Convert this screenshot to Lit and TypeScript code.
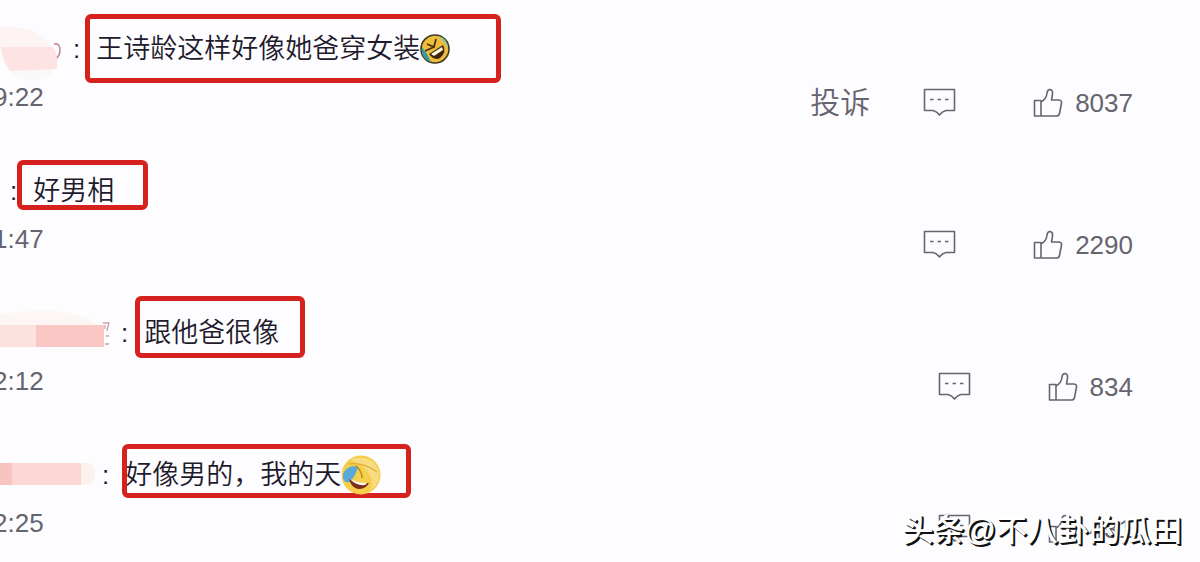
import { LitElement, html, css, nothing } from "lit";
import { customElement, property } from "lit/decorators.js";
import { classMap } from "lit/directives/class-map.js";

interface Comment {
  kind: string;
  nameWidth: number;
  text: string;
  time: string;
  likes: string;
  report?: boolean;
}

const comments: Comment[] = [
  { kind: "first", nameWidth: 73, text: "王诗龄这样好像她爸穿女装", time: "9:22", likes: "8037", report: true },
  { kind: "second", nameWidth: 10, text: "好男相", time: "1:47", likes: "2290" },
  { kind: "third", nameWidth: 121, text: "跟他爸很像", time: "2:12", likes: "834" },
  { kind: "fourth", nameWidth: 102, text: "好像男的，我的天", time: "2:25", likes: "431" },
];

/* Mosaic patches that hide the user names */
const masks: Record<string, unknown> = {
  first: html`<svg class="mask" width="64" height="60" viewBox="0 0 64 60" aria-hidden="true">
    <path d="M0 2 Q28 0 44 12 Q58 24 54 45 Q46 56 34 56 Q8 54 0 30Z" fill="#f8f9f8" />
    <path d="M0 2 Q28 0 42 12 L50 22 H0Z" fill="#fdf3f3" />
    <path d="M1 22 H53 Q59 30 57 44 L10 46 Q3 36 1 22Z" fill="#fde3e3" />
    <path d="M54 19 Q60 18 60 25 Q60 30 57 33" fill="none" stroke="#c98a90" stroke-width="1.5" />
  </svg>`,
  third: html`<svg class="mask" width="112" height="60" viewBox="0 0 112 60" aria-hidden="true">
    <path d="M0 6 Q50 -4 84 8 Q98 14 102 22 H0Z" fill="#fcf6f5" />
    <rect x="0" y="16" width="36" height="22" fill="#fde1df" />
    <rect x="36" y="16" width="68" height="22" fill="#fac7c4" />
    <path d="M103 14 H109 L107 22 M105 16 V20 M106 27 H109 M105 35 H109" fill="none" stroke="#c9a0a8" stroke-width="1.3" />
  </svg>`,
  fourth: html`<svg class="mask" width="96" height="60" viewBox="0 0 96 60" aria-hidden="true">
    <path d="M80 12 H90 Q96 14 95 24 Q94 34 84 34 H80Z" fill="#fdf1f0" />
    <rect x="0" y="12" width="12" height="22" fill="#f9c4c0" />
    <rect x="12" y="12" width="69" height="22" fill="#fbd6d2" />
  </svg>`,
};

const laughSmall = html`<svg class="emoji" width="30" height="30" viewBox="0 0 30 30" role="img" aria-label="笑">
  <circle cx="15" cy="15" r="14" fill="#efbd3b" stroke="#40391f" stroke-width="1.6" />
  <path d="M2 13 Q0 24 11 28 Q8 20 2 13Z" fill="#3a9aa0" />
  <path d="M18 2 Q28 4 28 15 Q25 8 18 2Z" fill="#8fc9a0" />
  <path d="M7 10 L14 13 L16 5 M5 17 L14 13" fill="none" stroke="#4a3210" stroke-width="1.8" />
  <path d="M9 20 L23 11 Q27 18 20 24 Q14 27 9 20Z" fill="#3d2408" />
  <path d="M11 20 L22 13 L23 16 L14 22Z" fill="#fff6dd" />
</svg>`;

const laughLarge = html`<svg class="emoji large" width="40" height="40" viewBox="0 0 40 40" role="img" aria-label="笑哭">
  <circle cx="20" cy="20" r="19.5" fill="#f4cf4c" />
  <path d="M10 5 Q28 -2 37 14 Q41 27 29 36 Q34 26 26 16 Q20 9 10 5Z" fill="#f8dc82" />
  <path d="M8 9 Q22 7 36 17" fill="none" stroke="#e0ac3a" stroke-width="1.4" />
  <path d="M2 19 Q7 9 17 12 Q15 20 9 27 Q1 29 2 19Z" fill="#58a9dc" />
  <path d="M15 11 Q21 16 21 23" fill="none" stroke="#b98224" stroke-width="1.4" />
  <path d="M8 24 Q17 29 28 28 Q25 34 17 34 Q10 32 8 24Z" fill="#7a2e18" />
  <path d="M9 24 Q17 28 26 28 L24 30 Q15 31 9 24Z" fill="#fffaf0" />
</svg>`;

@customElement("comment-item")
class CommentItem extends LitElement {
  @property({ attribute: false }) comment!: Comment;

  static styles = css`
    :host {
      display: block;
      height: 142px;
      color: #66646e;
      font-size: 26px;
      line-height: 30px;
    }
    .head {
      display: flex;
      align-items: center;
      height: 66px;
      padding-top: 16px;
      color: #1f1a2c;
    }
    .name {
      position: relative;
      flex: none;
      height: 30px;
    }
    .mask {
      position: absolute;
      left: 0;
      top: -9px;
    }
    .colon {
      flex: none;
      margin-right: 16px;
    }
    .text {
      position: relative;
      display: flex;
      align-items: center;
      height: 30px;
      margin: 0;
      font-size: 27px;
      font-weight: 350;
      white-space: nowrap;
    }
    .text::after {
      content: "";
      position: absolute;
      inset: var(--frame);
      border: 5px solid #d5221e;
      border-radius: 6px;
    }
    .first { --frame: -20px -51px -19px -11px; }
    .second { --frame: -16px -34px -4px -16px; }
    .third { --frame: -22px -26px -10px -9px; }
    .fourth { --frame: -16px -30px -8px -3px; }
    .emoji {
      flex: none;
    }
    .large {
      z-index: 1;
    }
    .foot {
      display: flex;
      justify-content: space-between;
      padding-right: 67px;
    }
    .time {
      margin-left: -7px;
    }
    .actions {
      display: flex;
      align-items: center;
      height: 42px;
    }
    button {
      display: flex;
      align-items: center;
      padding: 0;
      border: 0;
      background: none;
      color: inherit;
      font: inherit;
      cursor: pointer;
    }
    .report {
      margin-right: 53px;
      font-size: 30px;
      font-weight: 350;
    }
    .reply {
      margin-right: 77px;
    }
    .like {
      gap: 12px;
    }
    .icon {
      fill: none;
      stroke: currentColor;
      stroke-width: 1.6;
      stroke-linejoin: round;
    }
  `;

  render() {
    const c = this.comment;
    return html`
      <div class="head">
        <span class="name" style="width:${c.nameWidth}px">${masks[c.kind] ?? nothing}</span>
        <span class="colon">:</span>
        <p class=${classMap({ text: true, [c.kind]: true })}>
          ${c.text}${c.kind === "first" ? laughSmall : c.kind === "fourth" ? laughLarge : nothing}
        </p>
      </div>
      <div class="foot">
        <time class="time">${c.time}</time>
        <div class="actions">
          ${c.report ? html`<button class="report">投诉</button>` : nothing}
          <button class="reply" aria-label="回复">
            <svg class="icon" width="33" height="30" viewBox="0 0 33 30">
              <path d="M1.5 1.5 H31.5 V22.5 H23 Q19 23.5 16.5 27 Q14 23.5 10 22.5 H1.5Z" />
              <path d="M7 11.5 H10.5 M14.5 11.5 H18 M22 11.5 H25.5" />
            </svg>
          </button>
          <button class="like">
            <svg class="icon" width="30" height="30" viewBox="0 0 30 30" aria-hidden="true">
              <path d="M1.5 12.5 H8 V28 H1.5Z M8 14 Q13.5 11 14 5 Q14.5 1.5 17 1.5 Q20 2 19.5 6 L18.5 12 H26 Q29 12.3 28.5 15 L26.5 25.5 Q26 28 23.5 28 H8" />
            </svg>
            ${c.likes}
          </button>
        </div>
      </div>
    `;
  }
}

@customElement("app-root")
class AppRoot extends LitElement {
  static styles = css`
    :host {
      display: block;
      position: relative;
      height: 100vh;
      overflow: hidden;
      background: #fdfdff;
      font-family: "Liberation Sans", "Noto Sans CJK SC", sans-serif;
    }
    .watermark {
      position: absolute;
      right: 18px;
      bottom: 10px;
      color: #fff;
      font-size: 31px;
      font-weight: 500;
      line-height: 42px;
      text-shadow: 2px 2px 0 #111, 1px 1px 0 #111;
      white-space: nowrap;
    }
  `;

  render() {
    return html`
      <main>${comments.map((c) => html`<comment-item .comment=${c}></comment-item>`)}</main>
      <div class="watermark">头条@不八卦的瓜田</div>
    `;
  }
}
